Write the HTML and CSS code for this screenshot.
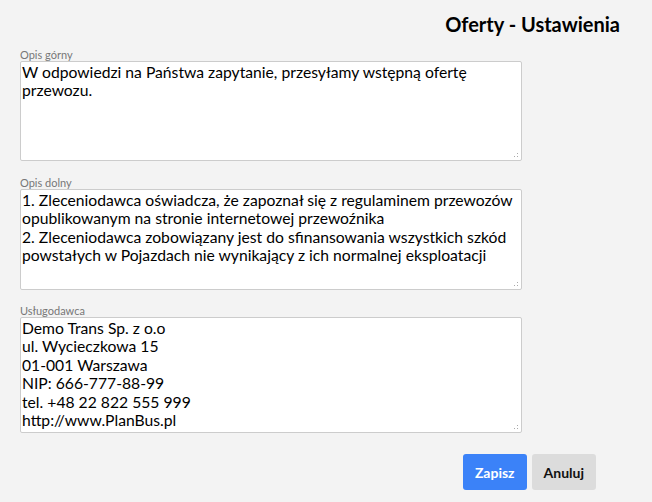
FILE: index.html
```html
<!DOCTYPE html>
<html lang="pl">

<head>
    <meta charset="UTF-8">
    <meta name="viewport" content="width=device-width, initial-scale=1.0">
    <title>Oferty - Ustawienia</title>
    <link rel="stylesheet" href="styles.css">
</head>

<body>
    <div class="header">
        <h1>Oferty - Ustawienia</h1>
    </div>
    <div class="form">
        <div class="field">
            <label for="top">Opis górny</label>
            <div class="box">
                <textarea id="top" class="small">W odpowiedzi na Państwa zapytanie, przesyłamy wstępną ofertę przewozu.</textarea>
                <span class="grip"></span>
            </div>
        </div>
        <div class="field tight">
            <label for="bottom">Opis dolny</label>
            <div class="box">
                <textarea id="bottom" class="mid">1. Zleceniodawca oświadcza, że zapoznał się z regulaminem przewozów opublikowanym na stronie internetowej przewoźnika
2. Zleceniodawca zobowiązany jest do sfinansowania wszystkich szkód powstałych w Pojazdach nie wynikający z ich normalnej eksploatacji</textarea>
                <span class="grip"></span>
            </div>
        </div>
        <div class="field">
            <label for="provider">Usługodawca</label>
            <div class="box">
                <textarea id="provider" class="big">Demo Trans Sp. z o.o
ul. Wycieczkowa 15
01-001 Warszawa
NIP: 666-777-88-99
tel. +48 22 822 555 999
http://www.PlanBus.pl</textarea>
                <span class="grip"></span>
            </div>
        </div>
    </div>
    <div class="buttons">
        <button class="btn save">Zapisz</button>
        <button class="btn cancel">Anuluj</button>
    </div>
</body>

</html>
```

FILE: styles.css
```css
* {
    font-family: Lato, "Open Sans", sans-serif;
    box-sizing: border-box;
}

body {
    margin: 0;
    padding: 0;
    background-color: #f3f3f3;
    color: #000;
}

.header {
    display: flex;
    justify-content: flex-end;
    padding: 12px 32px 0 0;
    height: 49px;
}

h1 {
    margin: 0;
    font-size: 20px;
    font-weight: bold;
    line-height: 24px;
}

.form {
    width: 522px;
    padding-left: 20px;
}

.field {
    display: flex;
    flex-direction: column;
    margin-bottom: 16px;
}

.field.tight {
    margin-bottom: 15px;
}

label {
    font-size: 11px;
    color: #777;
    line-height: 12px;
}

.box {
    position: relative;
}

textarea {
    display: block;
    width: 502px;
    margin: 0;
    padding: 1px 1px;
    border: 1px solid #cccccc;
    border-radius: 2px;
    background: white;
    color: #000;
    font-size: 15.7px;
    line-height: 18.4px;
    resize: none;
    overflow: hidden;
}

textarea.small {
    height: 100px;
}

textarea.mid {
    height: 101px;
}

textarea.big {
    height: 116px;
}

.grip {
    position: absolute;
    right: 2px;
    bottom: 2px;
    width: 10px;
    height: 10px;
    background: radial-gradient(circle, #aaa 0.8px, transparent 0.9px) 0 0 / 3px 3px;
    clip-path: polygon(100% 0, 100% 100%, 0 100%);
}

.buttons {
    display: flex;
    justify-content: flex-end;
    gap: 5px;
    padding: 5px 56px 0 0;
}

.btn {
    height: 36px;
    padding: 0 12px;
    border: none;
    border-radius: 3px;
    font-size: 14px;
    font-weight: bold;
}

.save {
    background-color: #3b82f8;
    color: white;
}

.cancel {
    background-color: #dcdcdc;
    color: #111;
}
```
